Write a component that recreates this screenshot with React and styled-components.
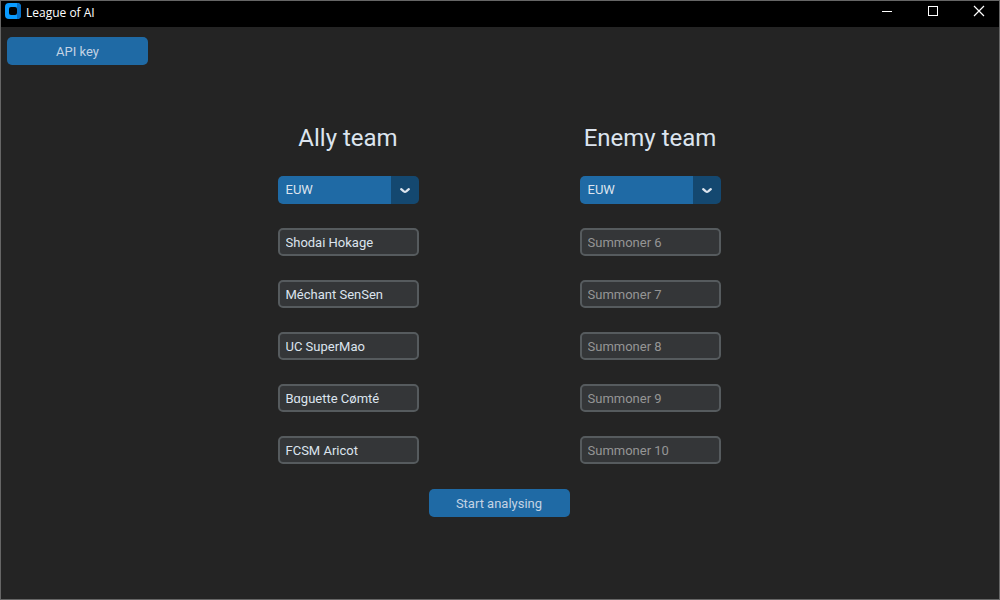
import React from "react";
import styled, { createGlobalStyle } from "styled-components";

const GlobalStyle = createGlobalStyle`
  *, *::before, *::after { box-sizing: border-box; }
  body {
    margin: 0;
    background: #242424;
    font-family: Roboto, "Liberation Sans", sans-serif;
    font-size: 13px;
  }
`;

const Window = styled.div`
  min-height: 100vh;
  display: flex;
  flex-direction: column;
  border: 1px solid #666;
  background: #242424;
`;

const TitleBar = styled.header`
  height: 26px;
  display: flex;
  align-items: center;
  justify-content: space-between;
  padding: 0 14px 6px 4px;
  background: #000;
  color: #fff;
`;

const AppName = styled.div`
  display: flex;
  align-items: center;
  gap: 5px;
  font: 12px/16px "Open Sans", "Noto Sans", sans-serif;
`;

const AppLabel = styled.span`
  padding-top: 4px;
`;

const WindowControls = styled.div`
  display: flex;
  gap: 34px;
`;

const ControlButton = styled.button`
  display: grid;
  padding: 0;
  border: 0;
  background: none;
  color: #fff;
`;

const Content = styled.main`
  flex: 1;
  display: flex;
  flex-direction: column;
  padding: 10px 8px 10px 6px;
`;

const PrimaryButton = styled.button`
  width: 141px;
  height: 28px;
  padding: 0;
  border: 0;
  border-radius: 5px;
  background: #1f6aa5;
  color: #c3d3e4;
  font: inherit;
  align-self: ${({ $align }) => $align || "center"};
`;

const Form = styled.form`
  display: flex;
  flex-direction: column;
  align-items: center;
  gap: 25px;
  padding-top: 59px;
`;

const Teams = styled.div`
  display: flex;
  gap: 161px;
`;

const Team = styled.section`
  width: 141px;
  display: flex;
  flex-direction: column;
  gap: 24px;
`;

const TeamTitle = styled.h2`
  margin: 0;
  color: #dce4ee;
  font-size: 24px;
  font-weight: 400;
  line-height: 28px;
  text-align: center;
  white-space: nowrap;
`;

const SelectBox = styled.div`
  position: relative;
  height: 28px;
`;

const RegionSelect = styled.select`
  appearance: none;
  display: block;
  width: 100%;
  height: 28px;
  padding: 0 28px 2px 8px;
  border: 0;
  border-radius: 5px;
  background: linear-gradient(to left, #144870 28px, #1f6aa5 28px);
  color: #dce4ee;
  font: inherit;
`;

const Chevron = styled.svg`
  position: absolute;
  top: 10px;
  right: 8px;
  pointer-events: none;
`;

const SummonerInput = styled.input`
  width: 100%;
  height: 28px;
  padding: 0 6px;
  border: 2px solid #565b5e;
  border-radius: 5px;
  background: #343638;
  color: #dce4ee;
  font: inherit;
  &::placeholder { color: #959595; opacity: 1; }
`;

const allies = ["Shodai Hokage", "Méchant SenSen", "UC SuperMao", "Bɑguette Cømté", "FCSM Aricot"];
const enemies = ["", "", "", "", ""];

function TeamColumn({ title, names, first }) {
  return (
    <Team aria-label={title}>
      <TeamTitle>{title}</TeamTitle>
      <SelectBox>
        <RegionSelect aria-label={`${title} region`} defaultValue="EUW">
          <option>EUW</option>
        </RegionSelect>
        <Chevron width="12" height="10" viewBox="0 0 12 10" aria-hidden="true">
          <path d="M2.2 3.2L4.8 5.4Q6 6.2 7.2 5.4L9.8 3.2" fill="none" stroke="#dce4ee" strokeWidth="2.3" strokeLinecap="round" strokeLinejoin="round" />
        </Chevron>
      </SelectBox>
      {names.map((name, i) => (
        <SummonerInput
          key={i}
          aria-label={`Summoner ${first + i}`}
          placeholder={`Summoner ${first + i}`}
          defaultValue={name}
        />
      ))}
    </Team>
  );
}

export default function App() {
  return (
    <>
      <GlobalStyle />
      <Window>
        <TitleBar>
          <AppName>
            <svg width="16" height="16" viewBox="0 0 16 16" aria-hidden="true">
              <rect width="16" height="16" rx="4" fill="#0a9bff" />
              <path d="M12 0Q16 0 16 4V12Q16 16 12 16Z" fill="#0770c8" />
              <rect x="4" y="4" width="8" height="8" rx="2" fill="#000" />
            </svg>
            <AppLabel>League of AI</AppLabel>
          </AppName>
          <WindowControls>
            <ControlButton type="button" aria-label="Minimize">
              <svg width="12" height="12"><path d="M1 6.5H11" stroke="currentColor" /></svg>
            </ControlButton>
            <ControlButton type="button" aria-label="Maximize">
              <svg width="12" height="12"><rect x="1.5" y="1.5" width="9" height="9" fill="none" stroke="currentColor" /></svg>
            </ControlButton>
            <ControlButton type="button" aria-label="Close">
              <svg width="12" height="12"><path d="M1 1L11 11M11 1L1 11" stroke="currentColor" strokeWidth="1.2" /></svg>
            </ControlButton>
          </WindowControls>
        </TitleBar>
        <Content>
          <PrimaryButton type="button" $align="flex-start">API key</PrimaryButton>
          <Form onSubmit={(e) => e.preventDefault()}>
            <Teams>
              <TeamColumn title="Ally team" names={allies} first={1} />
              <TeamColumn title="Enemy team" names={enemies} first={6} />
            </Teams>
            <PrimaryButton type="submit">Start analysing</PrimaryButton>
          </Form>
        </Content>
      </Window>
    </>
  );
}
